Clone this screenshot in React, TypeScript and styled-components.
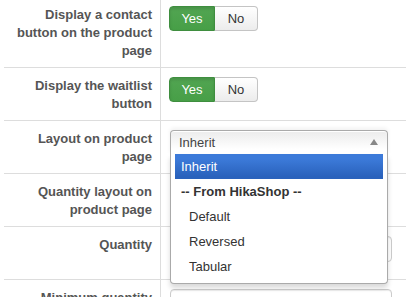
import styled, { createGlobalStyle, css } from "styled-components";

// ----------------------------------------------
//  global
// ----------------------------------------------
const GlobalStyle = createGlobalStyle`
  html, body {
    margin: 0;
    padding: 0;
    background: #fff;
    overflow: hidden;
  }
  body {
    font-family: "Liberation Sans", Arial, sans-serif;
    font-size: 13px;
    line-height: 18px;
    color: #333;
  }
`;

// ----------------------------------------------
//  css mixin
// ----------------------------------------------
const fieldBox = css`
  box-sizing: border-box;
  height: 26px;
  border: 1px solid #ccc;
  border-radius: 4px;
  background: #fff;
  box-shadow: inset 0 1px 1px rgba(0, 0, 0, 0.075);
`;

// ----------------------------------------------
//  styled components
// ----------------------------------------------
const Table = styled.div`
  margin-top: -3px;
  padding-left: 4px;
`;

const Row = styled.div`
  display: grid;
  grid-template-columns: 157px 1fr;
  border-top: 1px solid #ddd;
`;

const Label = styled.div`
  box-sizing: border-box;
  padding: 9px 8px 7px 4px;
  border-right: 1px solid #ddd;
  text-align: right;
  font-weight: 700;
  color: #555;
`;

const Control = styled.div`
  position: relative;
  padding: 9px 0 7px 9px;
`;

const Toggle = styled.div`
  display: inline-flex;
  margin-left: -1px;
`;

const ToggleButton = styled.span<{ $active?: boolean }>`
  box-sizing: border-box;
  display: inline-flex;
  align-items: center;
  justify-content: center;
  height: 25px;
  padding: 0 12px;
  font-size: 13px;
  border: 1px solid;
  ${({ $active }) =>
    $active
      ? css`
          width: 46px;
          color: #fff;
          background: linear-gradient(#52a552, #479f47);
          border-color: #3f8e3f;
          border-radius: 4px 0 0 4px;
          box-shadow: inset 0 2px 3px rgba(0, 0, 0, 0.12);
        `
      : css`
          width: 43px;
          color: #333;
          background: linear-gradient(#fff, #ececec);
          border-color: #c4c4c4;
          border-left: none;
          border-radius: 0 4px 4px 0;
        `}
`;

const Input = styled.div<{ $width: number }>`
  ${fieldBox};
  width: ${({ $width }) => $width}px;
  margin-bottom: 10px;
`;

const Chosen = styled.div`
  position: relative;
  width: 218px;
  z-index: 5;
`;

const ChosenHead = styled.div`
  box-sizing: border-box;
  display: flex;
  align-items: center;
  justify-content: space-between;
  height: 25px;
  padding: 0 9px 0 8px;
  border: 1px solid #aaa;
  border-bottom-color: #ddd;
  border-radius: 4px 4px 0 0;
  background: linear-gradient(#eee 10%, #fff 80%);
  box-shadow: 0 1px 0 #fff inset, 0 -2px 4px rgba(0, 0, 0, 0.06);
  color: #444;
`;

const Arrow = styled.span`
  width: 0;
  height: 0;
  border-left: 4px solid transparent;
  border-right: 4px solid transparent;
  border-bottom: 6px solid #888;
  margin-top: -1px;
`;

const Drop = styled.ul`
  position: absolute;
  top: 24px;
  left: 0;
  box-sizing: border-box;
  width: 218px;
  margin: 0;
  padding: 0 4px 4px 4px;
  list-style: none;
  background: #fff;
  border: 1px solid #aaa;
  border-top: 0;
  border-radius: 0 0 4px 4px;
  box-shadow: 0 4px 5px rgba(0, 0, 0, 0.15);
`;

const Option = styled.li<{ $highlighted?: boolean; $group?: boolean; $indent?: boolean }>`
  padding: 5px 6px;
  padding-left: ${({ $indent }) => ($indent ? "14px" : "6px")};
  line-height: 15px;
  color: #333;
  font-weight: ${({ $group }) => ($group ? 700 : 400)};
  ${({ $highlighted }) =>
    $highlighted &&
    css`
      color: #fff;
      background: linear-gradient(#3c7ad9 20%, #2a62bc 90%);
    `}
`;

// ----------------------------------------------
//  data
// ----------------------------------------------
const layouts = ["Default", "Reversed", "Tabular"];

// ----------------------------------------------
//  function App()
// ----------------------------------------------
export default function App() {
  return (
    <>
      <GlobalStyle />
      <Table>
        <Row style={{ borderTop: "none" }}>
          <Label>Display a contact button on the product page</Label>
          <Control>
            <Toggle>
              <ToggleButton $active>Yes</ToggleButton>
              <ToggleButton>No</ToggleButton>
            </Toggle>
          </Control>
        </Row>
        <Row>
          <Label>Display the waitlist button</Label>
          <Control>
            <Toggle>
              <ToggleButton $active>Yes</ToggleButton>
              <ToggleButton>No</ToggleButton>
            </Toggle>
          </Control>
        </Row>
        <Row>
          <Label>Layout on product page</Label>
          <Control>
            <Chosen>
              <ChosenHead>
                <span>Inherit</span>
                <Arrow />
              </ChosenHead>
              <Drop>
                <Option $highlighted>Inherit</Option>
                <Option $group>-- From HikaShop --</Option>
                {layouts.map((l) => (
                  <Option key={l} $indent>
                    {l}
                  </Option>
                ))}
              </Drop>
            </Chosen>
          </Control>
        </Row>
        <Row>
          <Label>Quantity layout on product page</Label>
          <Control>
            <Input $width={218} />
          </Control>
        </Row>
        <Row>
          <Label>Quantity</Label>
          <Control>
            <Input $width={222} />
          </Control>
        </Row>
        <Row>
          <Label>Minimum quantity</Label>
          <Control>
            <Input $width={222} />
          </Control>
        </Row>
      </Table>
    </>
  );
}
